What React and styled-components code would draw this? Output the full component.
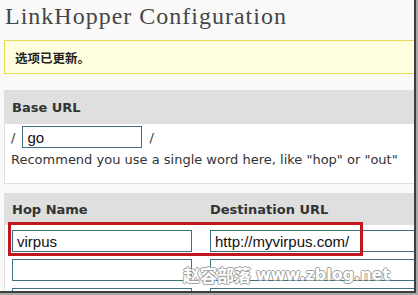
import React from 'react';
import styled, { createGlobalStyle } from 'styled-components';

const GlobalStyle = createGlobalStyle`
  html, body {
    margin: 0;
    padding: 0;
    background: #a9a9a9;
  }
  body {
    width: 418px;
    height: 295px;
    overflow: hidden;
  }
`;

export const Frame = styled.div`
  position: relative;
  width: 416px;
  height: 293px;
  overflow: hidden;
  background: #f9f9f9;
  border-right: 2px solid #3e3e3e;
  border-bottom: 2px solid #3e3e3e;
  padding-left: 4px;
  box-sizing: border-box;
  font-family: 'DejaVu Sans', Verdana, sans-serif;
  color: #333;
`;

export const Title = styled.h2`
  margin: 0;
  height: 40px;
  padding: 3px 0 0 1px;
  box-sizing: border-box;
  font-family: 'Liberation Serif', Georgia, serif;
  font-weight: normal;
  font-size: 24px;
  letter-spacing: 1px;
  color: #464646;
  white-space: nowrap;
`;

export const Notice = styled.div`
  width: 440px;
  height: 34px;
  box-sizing: border-box;
  background: #ffffe0;
  border: 1px solid #e6db55;
  padding-left: 10px;
  display: flex;
  align-items: center;
  font-family: 'Noto Sans CJK SC', sans-serif;
  font-weight: bold;
  font-size: 12.5px;
  color: #222;
`;

export const Panel = styled.section`
  width: 440px;
  margin-top: ${({ $gap }) => $gap}px;
  background: #fff;
  border: 1px solid #dfdfdf;
  box-sizing: border-box;
`;

export const PanelHead = styled.div`
  height: ${({ $h }) => $h}px;
  background: #dfdfdf;
  display: flex;
  align-items: center;
  padding-left: 7px;
  font-weight: bold;
  font-size: 13px;
  color: #333;
`;

export const PanelBody = styled.div`
  padding: 2px 0 0 6px;
  height: ${({ $h }) => $h}px;
  box-sizing: border-box;
  font-size: 13px;
  color: #333;
`;

export const UrlRow = styled.div`
  display: flex;
  align-items: center;
  gap: 7px;
  height: 22px;
`;

export const TextBox = styled.input`
  width: ${({ $w }) => $w}px;
  height: 22px;
  box-sizing: border-box;
  border: 1px solid #3f7180;
  background: #fff;
  padding: 0 4px;
  margin: 0;
  font-family: 'Liberation Sans', Arial, sans-serif;
  font-size: 15px;
  color: #111;
  outline: none;
`;

export const Hint = styled.p`
  margin: 4px 0 0;
  white-space: nowrap;
`;

export const Grid = styled.div`
  display: grid;
  grid-template-columns: 198px 1fr;
  row-gap: 7px;
  padding: 5px 0 0 7px;
`;

export const ColHead = styled.div`
  display: grid;
  grid-template-columns: 198px 1fr;
  align-items: center;
  height: 31px;
  background: #dfdfdf;
  padding-left: 7px;
  font-weight: bold;
  font-size: 13px;
  color: #333;
`;

export const Marker = styled.div`
  position: absolute;
  left: 8px;
  top: 222px;
  width: 355px;
  height: 34px;
  box-sizing: border-box;
  border: 3px solid #c0161d;
  pointer-events: none;
`;

export const Watermark = styled.div`
  position: absolute;
  left: 183px;
  top: 262px;
  display: flex;
  align-items: center;
  gap: 5px;
  white-space: nowrap;
  color: #fff;
  font-weight: bold;
  text-shadow: -1px 0 #a0a0a0, 1px 0 #a0a0a0, 0 -1px #a0a0a0, 0 1px #a0a0a0;
  pointer-events: none;
`;

export const MarkCjk = styled.span`
  font-family: 'Noto Sans CJK SC', sans-serif;
  font-size: 17px;
`;

export const MarkUrl = styled.span`
  font-family: 'DejaVu Sans', sans-serif;
  font-size: 16px;
`;

const hops = [
  { name: 'virpus', url: 'http://myvirpus.com/' },
  { name: '', url: '' },
  { name: '', url: '' },
];

export default function App() {
  return (
    <>
      <GlobalStyle />
      <Frame>
        <Title>LinkHopper Configuration</Title>
        <Notice>选项已更新。</Notice>

        <Panel $gap={16}>
          <PanelHead $h={33}>Base URL</PanelHead>
          <PanelBody $h={59}>
            <UrlRow>
              <span>/</span>
              <TextBox $w={120} defaultValue="go" />
              <span>/</span>
            </UrlRow>
            <Hint>Recommend you use a single word here, like "hop" or "out"</Hint>
          </PanelBody>
        </Panel>

        <Panel $gap={9}>
          <ColHead>
            <span>Hop Name</span>
            <span>Destination URL</span>
          </ColHead>
          <Grid>
            {hops.map((hop, i) => (
              <React.Fragment key={i}>
                <TextBox $w={180} defaultValue={hop.name} />
                <TextBox $w={240} defaultValue={hop.url} />
              </React.Fragment>
            ))}
          </Grid>
        </Panel>

        <Marker />
        <Watermark>
          <MarkCjk>赵容部落</MarkCjk>
          <MarkUrl>www.zblog.net</MarkUrl>
        </Watermark>
      </Frame>
    </>
  );
}
